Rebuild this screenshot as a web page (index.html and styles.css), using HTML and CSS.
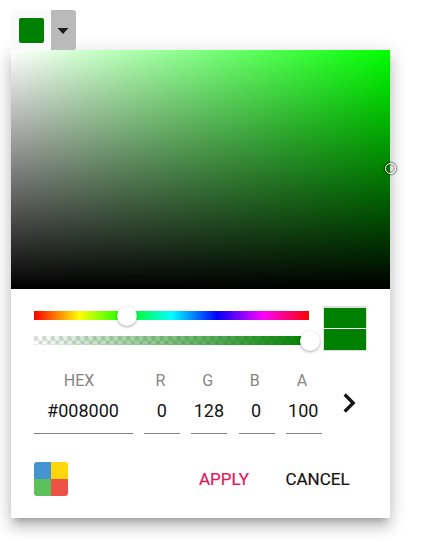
FILE: index.html
```html
<!DOCTYPE html>
<html lang="en">
<head>
<meta charset="utf-8">
<title>Color Picker</title>
<link rel="stylesheet" href="styles.css">
</head>
<body>
<div class="split-button">
  <div class="current"><span class="swatch"></span></div>
  <div class="caret"><svg width="12" height="6" viewBox="0 0 12 6"><path d="M.5 0h11L6 6z" fill="#1c1c1c"/></svg></div>
</div>
<div class="picker">
  <div class="palette"><span class="handle"></span></div>
  <div class="sliders">
    <div class="tracks">
      <div class="track hue"><span class="knob"></span></div>
      <div class="track opacity"><span class="knob"></span></div>
    </div>
    <div class="preview"><span></span><span></span></div>
  </div>
  <div class="values">
    <label class="field hex"><span>HEX</span><b>#008000</b></label>
    <label class="field"><span>R</span><b>0</b></label>
    <label class="field"><span>G</span><b>128</b></label>
    <label class="field"><span>B</span><b>0</b></label>
    <label class="field"><span>A</span><b>100</b></label>
    <svg class="next" width="14" height="20" viewBox="0 0 14 20"><path d="M1.7 1.5 10.2 10 1.7 18.5" fill="none" stroke="#141414" stroke-width="3.3"/></svg>
  </div>
  <div class="footer">
    <div class="mode"><i></i><i></i><i></i><i></i></div>
    <span class="apply">APPLY</span>
    <span class="cancel">CANCEL</span>
  </div>
</div>
</body>
</html>
```
FILE: styles.css
```css
* { box-sizing: border-box; }
body {
  margin: 0;
  padding: 10px 0 0 11px;
  height: 540px;
  overflow: hidden;
  background: #fff;
  font-family: Roboto, "Liberation Sans", sans-serif;
  color: #141414;
}
.split-button {
  display: flex;
  width: 65px;
  height: 40px;
  border-radius: 3px;
  overflow: hidden;
}
.current {
  width: 40px;
  background: #fafafa;
  padding: 8px;
}
.swatch {
  display: block;
  width: 25px;
  height: 25px;
  border-radius: 2px;
  background: #008000;
}
.caret {
  width: 25px;
  background: #bababa;
  display: flex;
  align-items: center;
  justify-content: center;
  padding: 2px 1px 0 0;
}
.caret svg { display: block; }
.picker {
  width: 379px;
  height: 468px;
  background: #fff;
  box-shadow: 0 6.25px 6.25px -3.75px rgba(0,0,0,.2), 0 10px 12.5px 1.25px rgba(0,0,0,.14), 0 3.75px 17.5px 2.5px rgba(0,0,0,.12);
}
.palette {
  position: relative;
  height: 239px;
  background: linear-gradient(to top, #000, transparent), linear-gradient(to right, #fff, #0f0);
}
.handle {
  position: absolute;
  right: -6px;
  top: 113px;
  width: 11px;
  height: 11px;
  border: 1.5px solid #fff;
  border-radius: 50%;
  box-shadow: 0 0 2px 1px rgba(0,0,0,.5), inset 0 0 2px 1px rgba(0,0,0,.4);
}
.sliders {
  display: flex;
  gap: 14px;
  padding: 16.5px 23px 0;
}
.tracks { width: 275px; padding-top: 5.5px; }
.track { position: relative; height: 9px; }
.hue { background: linear-gradient(to right, #f00, #ff0 16.6%, #0f0 33.3%, #0ff 50%, #00f 66.6%, #f0f 83.3%, #f00); }
.opacity {
  margin-top: 16px;
  background: linear-gradient(to right, rgba(0,128,0,0), #008000), repeating-conic-gradient(#fff 0 25%, #dadada 0 50%) 0 0 / 8.4px 8.4px;
}
.knob {
  position: absolute;
  left: 83px;
  top: -5.5px;
  width: 20px;
  height: 20px;
  border-radius: 50%;
  background: #fff;
  box-shadow: 0 1px 3px rgba(0,0,0,.35);
}
.opacity .knob { left: 266px; top: -5px; }
.preview {
  width: 44px;
  height: 45px;
  border: 1px solid #dedede;
  border-top-width: 2px;
  display: flex;
  flex-direction: column;
  gap: 1px;
  background: #fff;
}
.preview span { flex: 1; background: #008000; }
.values {
  display: grid;
  grid-template-columns: 99px 36px 36px 36px 36px 14px;
  column-gap: 11.2px;
  padding: 20px 0 0 23px;
}
.field {
  height: 63px;
  border-bottom: 1px solid #808080;
  text-align: center;
}
.field span, .field b {
  display: block;
  font-weight: 400;
  line-height: 20px;
}
.field span { font-size: 16px; color: #858585; padding-right: 3.5px; }
.hex span { padding-right: 9px; }
.field b { font-size: 18px; margin: 10px 0 0 -1px; white-space: nowrap; }
.next { margin: 22px 0 0 10px; }
.footer {
  display: flex;
  align-items: center;
  height: 34px;
  margin: 28px 0 0 22.5px;
  font-size: 17px;
}
.mode {
  display: grid;
  grid-template-columns: 17px 17px;
  width: 34px;
  height: 34px;
  border-radius: 3px;
  overflow: hidden;
}
.mode i:nth-child(1) { background: #4394d0; }
.mode i:nth-child(2) { background: #ffd60a; }
.mode i:nth-child(3) { background: #5dc15b; }
.mode i:nth-child(4) { background: #ef5046; }
.apply { margin-left: 131.5px; color: #e3165b; -webkit-text-stroke: .2px; }
.cancel { margin-left: 36.5px; -webkit-text-stroke: .2px; }
```
